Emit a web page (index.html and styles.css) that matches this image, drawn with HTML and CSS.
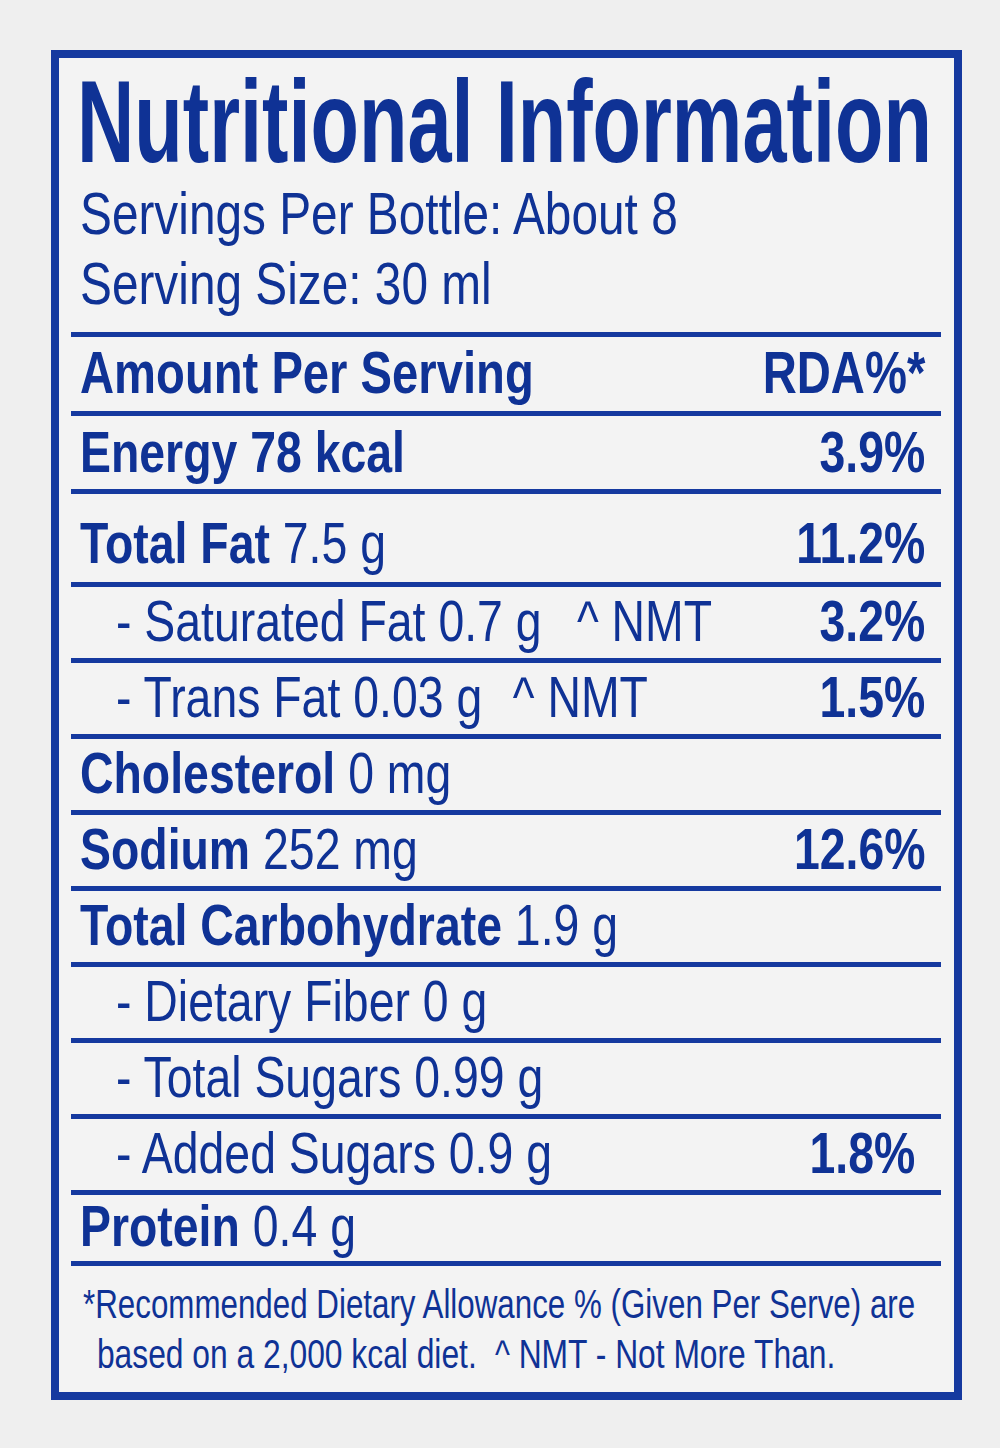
FILE: index.html
```html
<!DOCTYPE html>
<html lang="en">
<head>
<meta charset="utf-8">
<title>Nutritional Information</title>
<link rel="stylesheet" href="styles.css">
</head>
<body>
<div class="panel">
  <h1 class="title"><span class="title-text">Nutritional Information</span></h1>
  <p class="serv"><span class="cond">Servings Per Bottle: About 8</span></p>
  <p class="serv"><span class="cond">Serving Size: 30 ml</span></p>
  <div class="table">
    <div class="row row-head"><span class="label"><b>Amount Per Serving</b></span><span class="pct">RDA%*</span></div>
    <div class="row row-energy"><span class="label"><b>Energy 78 kcal</b></span><span class="pct">3.9%</span></div>
    <div class="row row-fat"><span class="label"><b>Total Fat</b> 7.5 g</span><span class="pct">11.2%</span></div>
    <div class="row sub"><span class="label">- Saturated Fat 0.7 g <span class="nmt nmt-wide">^ NMT</span></span><span class="pct">3.2%</span></div>
    <div class="row sub"><span class="label">- Trans Fat 0.03 g <span class="nmt">^ NMT</span></span><span class="pct">1.5%</span></div>
    <div class="row"><span class="label"><b>Cholesterol</b> 0 mg</span></div>
    <div class="row"><span class="label"><b>Sodium</b> 252 mg</span><span class="pct">12.6%</span></div>
    <div class="row"><span class="label"><b>Total Carbohydrate</b> 1.9 g</span></div>
    <div class="row sub"><span class="label">- Dietary Fiber 0 g</span></div>
    <div class="row sub"><span class="label">- Total Sugars 0.99 g</span></div>
    <div class="row sub"><span class="label">- Added Sugars 0.9 g</span><span class="pct pct-shift">1.8%</span></div>
    <div class="row row-last"><span class="label"><b>Protein</b> 0.4 g</span></div>
  </div>
  <div class="foot">
    <span class="foot-line">*Recommended Dietary Allowance % (Given Per Serve) are</span>
    <span class="foot-line foot-second">based on a 2,000 kcal diet. <span class="foot-gap">^ NMT - Not More Than.</span></span>
  </div>
</div>
</body>
</html>
```

FILE: styles.css
```css
html, body {
  margin: 0;
  padding: 0;
}
body {
  background: #efefef;
  font-family: "Liberation Sans", Arial, sans-serif;
  color: #0f3295;
  width: 1000px;
  height: 1448px;
  overflow: hidden;
}
.panel {
  box-sizing: border-box;
  width: 911px;
  height: 1350px;
  margin: 50px 0 0 51px;
  border: 8px solid #15399f;
  background: #f3f3f3;
  padding: 6px 13px 0 12px;
  overflow: hidden;
}
.title {
  margin: 0;
  font-size: 117px;
  line-height: 115px;
  font-weight: 700;
  white-space: nowrap;
  padding-left: 6px;
}
.title-text {
  display: inline-block;
  transform: scaleX(0.678);
  transform-origin: left center;
}
.serv {
  margin: 0;
  padding-left: 9px;
  font-size: 59px;
  line-height: 70px;
  white-space: nowrap;
}
.cond {
  display: inline-block;
  transform: scaleX(0.81);
  transform-origin: left center;
}
.table {
  margin-top: 13px;
}
.row {
  display: flex;
  align-items: center;
  box-sizing: border-box;
  height: 76px;
  border-top: 5px solid #15399f;
  padding: 0 16px 4px 9px;
  font-size: 58px;
  line-height: 58px;
  white-space: nowrap;
}
.label {
  display: inline-block;
  flex: 0 1 auto;
  min-width: 0;
  transform: scaleX(0.8);
  transform-origin: left center;
}
.pct {
  display: inline-block;
  flex: 0 0 auto;
  margin-left: auto;
  font-weight: 700;
  transform: scaleX(0.8);
  transform-origin: right center;
}
.row b {
  font-weight: 700;
}
.nmt {
  margin-left: 22px;
}
.nmt-wide {
  margin-left: 28px;
}
.row-head {
  height: 79px;
  font-size: 59px;
  padding-bottom: 2px;
}
.row-energy {
  height: 78px;
  padding-bottom: 2px;
}
.row-fat {
  height: 93px;
  padding-top: 10px;
  padding-bottom: 0;
}
.sub {
  padding-left: 45px;
}
.pct-shift {
  margin-right: 10px;
}
.row-last {
  border-bottom: 5px solid #15399f;
}
.foot {
  margin: 13px 0 0 0;
  padding-left: 12px;
  font-size: 41px;
  line-height: 50px;
  white-space: nowrap;
}
.foot-line {
  display: block;
  transform: scaleX(0.764);
  transform-origin: left center;
}
.foot-second {
  padding-left: 18px;
  transform: scaleX(0.775);
}
.foot-gap {
  margin-left: 12px;
}
```
